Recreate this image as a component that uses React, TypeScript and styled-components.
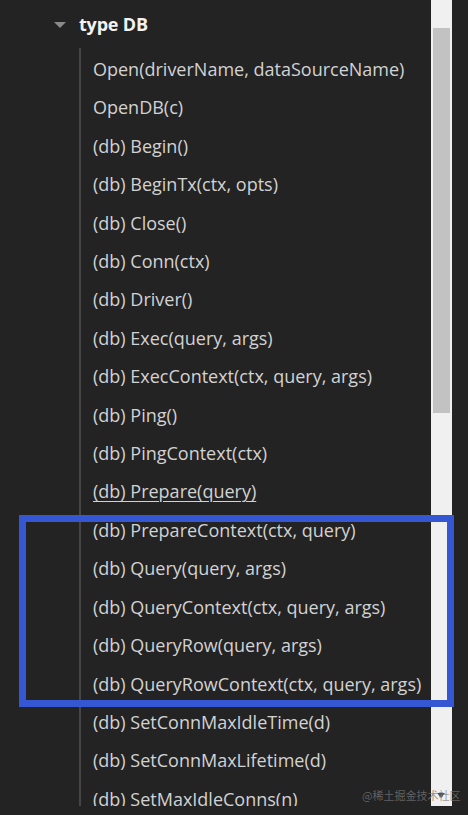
import React from "react";
import styled, { createGlobalStyle } from "styled-components";

type Member = {
  label: string;
  active?: boolean;
};

const members: Member[] = [
  { label: "Open(driverName, dataSourceName)" },
  { label: "OpenDB(c)" },
  { label: "(db) Begin()" },
  { label: "(db) BeginTx(ctx, opts)" },
  { label: "(db) Close()" },
  { label: "(db) Conn(ctx)" },
  { label: "(db) Driver()" },
  { label: "(db) Exec(query, args)" },
  { label: "(db) ExecContext(ctx, query, args)" },
  { label: "(db) Ping()" },
  { label: "(db) PingContext(ctx)" },
  { label: "(db) Prepare(query)", active: true },
  { label: "(db) PrepareContext(ctx, query)" },
  { label: "(db) Query(query, args)" },
  { label: "(db) QueryContext(ctx, query, args)" },
  { label: "(db) QueryRow(query, args)" },
  { label: "(db) QueryRowContext(ctx, query, args)" },
  { label: "(db) SetConnMaxIdleTime(d)" },
  { label: "(db) SetConnMaxLifetime(d)" },
  { label: "(db) SetMaxIdleConns(n)" },
];

const GlobalStyle = createGlobalStyle`
  html, body {
    margin: 0;
    padding: 0;
    background: #232324;
  }
  body {
    font-family: "Open Sans", "Noto Sans CJK SC", sans-serif;
    -webkit-font-smoothing: antialiased;
  }
`;

const Screen = styled.div`
  position: relative;
  width: 468px;
  height: 815px;
  overflow: hidden;
  background: #232324;
`;

const Pane = styled.div`
  display: flex;
  height: 806px;
  padding-right: 16px;
`;

const Outline = styled.div`
  flex: 1;
  overflow: hidden;
`;

const TypeHeader = styled.div`
  display: flex;
  align-items: center;
  height: 48px;
  padding-left: 54px;
  gap: 13px;
`;

const Caret = styled.span`
  width: 0;
  height: 0;
  border-left: 6px solid transparent;
  border-right: 6px solid transparent;
  border-top: 6px solid #8a8a8a;
  margin-top: 2px;
`;

const TypeName = styled.span`
  font-size: 18px;
  font-weight: 700;
  color: #f2f2f2;
  letter-spacing: -0.2px;
`;

const MemberList = styled.ul`
  list-style: none;
  margin: 0 0 0 79px;
  padding: 2px 0 0 12px;
  border-left: 2px solid #464646;
  height: 100%;
`;

const MemberItem = styled.li<{ $active?: boolean }>`
  height: 38.42px;
  line-height: 38.42px;
  font-size: 18px;
  color: #d2d2d2;
  white-space: nowrap;
  text-decoration: ${({ $active }) => ($active ? "underline" : "none")};
  text-underline-offset: 3px;
  text-decoration-thickness: 1px;
`;

const Scrollbar = styled.div`
  position: relative;
  width: 21px;
  background: #f0f0f0;
  padding: 28px 2px 0;
  box-sizing: border-box;
`;

const Thumb = styled.div`
  height: 385px;
  background: #c2c2c2;
`;

const DownArrow = styled.span`
  position: absolute;
  left: 6px;
  bottom: 8px;
  width: 0;
  height: 0;
  border-left: 4px solid transparent;
  border-right: 4px solid transparent;
  border-top: 5px solid #505050;
`;

const Highlight = styled.div`
  position: absolute;
  left: 19px;
  top: 515px;
  width: 435px;
  height: 192px;
  box-sizing: border-box;
  border: 7px solid #3557d4;
  pointer-events: none;
`;

const Watermark = styled.span`
  position: absolute;
  left: 362px;
  top: 787px;
  font-family: "Noto Sans CJK SC", sans-serif;
  font-size: 11px;
  color: rgba(120, 120, 120, 0.75);
  white-space: nowrap;
`;

export default function App() {
  return (
    <>
      <GlobalStyle />
      <Screen>
        <Pane>
          <Outline>
            <TypeHeader>
              <Caret />
              <TypeName>type DB</TypeName>
            </TypeHeader>
            <MemberList>
              {members.map((m) => (
                <MemberItem key={m.label} $active={m.active}>
                  {m.label}
                </MemberItem>
              ))}
            </MemberList>
          </Outline>
          <Scrollbar>
            <Thumb />
            <DownArrow />
          </Scrollbar>
        </Pane>
        <Highlight />
        <Watermark>@稀土掘金技术社区</Watermark>
      </Screen>
    </>
  );
}
